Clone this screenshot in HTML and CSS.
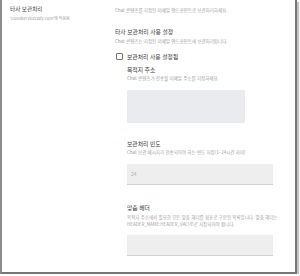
FILE: index.html
```html
<!DOCTYPE html>
<html lang="ko">
<head>
  <meta charset="UTF-8">
  <title>타사 보관처리</title>
  <link rel="stylesheet" href="styles.css">
</head>
<body>

<div class="panel">
  <div class="side">
    <div class="side-title">타사 보관처리</div>
    <div class="side-sub">'cloudservicecody.com'에 적용됨</div>
  </div>

  <div class="main">
    <div class="desc first">Chat 콘텐츠를 지정된 이메일 엔드포인트로 보관처리하세요.</div>

    <div class="title setting">타사 보관처리 사용 설정</div>
    <div class="desc">Chat 콘텐츠는 지정된 이메일 엔드포인트에 보관처리됩니다.</div>

    <label class="check-row">
      <span class="check"></span>
      <span class="check-label">보관처리 사용 설정됨</span>
    </label>

    <div class="sub">
      <div class="title">목적지 주소</div>
      <div class="desc">Chat 콘텐츠가 전송될 이메일 주소를 지정하세요.</div>
      <div class="field area"></div>

      <div class="title gap">보관처리 빈도</div>
      <div class="desc">Chat 보관 메시지가 전송되어야 하는 빈도 지정(1~24시간 사이)</div>
      <div class="field line">24</div>

      <div class="title gap2">맞춤 헤더</div>
      <div class="desc multi">목적지 주소에서 필요한 모든 맞춤 헤더를 쉼표로 구분된 목록입니다. 맞춤 헤더는<br>HEADER_NAME:HEADER_VALUE로 지정되어야 합니다.</div>
      <div class="field line last"></div>
    </div>
  </div>
</div>

</body>
</html>
```

FILE: styles.css
```css
body {
  margin: 0;
  background: #fff;
  font-family: "Noto Sans CJK KR", "Noto Sans", sans-serif;
}
.panel {
  display: flex;
  box-sizing: border-box;
  width: 297px;
  height: 274px;
  border-left: 2px solid #8c8c8c;
  border-right: 2px solid #777;
  border-bottom: 2px solid #777;
  box-shadow: 2px 2px 1px #c4c4c4;
  overflow: hidden;
  white-space: nowrap;
}
.side {
  width: 105px;
  padding-left: 8px;
  flex-shrink: 0;
}
.side-title {
  margin-top: 5px;
  font-size: 5.6px;
  line-height: 8px;
  color: #444;
}
.side-sub {
  margin-top: 2px;
  font-size: 4px;
  line-height: 6px;
  color: #a0a0a0;
}
.main {
  flex: 1;
  padding-top: 7px;
}
.title {
  font-size: 5.8px;
  line-height: 8px;
  color: #3a3a3a;
}
.desc {
  margin-top: 1px;
  font-size: 4.5px;
  line-height: 6px;
  color: #a0a0a0;
}
.desc.first {
  margin-top: 0;
}
.title.setting {
  margin-top: 15px;
}
.setting + .desc {
  margin-top: 2px;
}
.check-row {
  display: flex;
  align-items: center;
  margin-top: 9px;
  height: 7px;
}
.check {
  box-sizing: border-box;
  width: 7px;
  height: 7px;
  margin-left: 1px;
  border: 1px solid #777;
  border-radius: 1px;
}
.check-label {
  margin-left: 4px;
  font-size: 5.8px;
  color: #3a3a3a;
}
.sub {
  margin-left: 12px;
  margin-top: 6px;
}
.field {
  box-sizing: border-box;
  margin-top: 9px;
  background: #eeeeee;
  border-bottom: 1px solid #d0d0d0;
  font-size: 5px;
  color: #b0b0b0;
}
.field.area {
  width: 118px;
  height: 33px;
  background: #e9ebee;
  border-bottom: none;
}
.field.line {
  width: 146px;
  height: 21px;
  line-height: 20px;
  padding-left: 4px;
}
.title.gap {
  margin-top: 17px;
}
.title.gap2 {
  margin-top: 19px;
}
.desc.multi {
  margin-top: 2px;
  line-height: 7px;
}
.field.last {
  margin-top: 7px;
}
```
